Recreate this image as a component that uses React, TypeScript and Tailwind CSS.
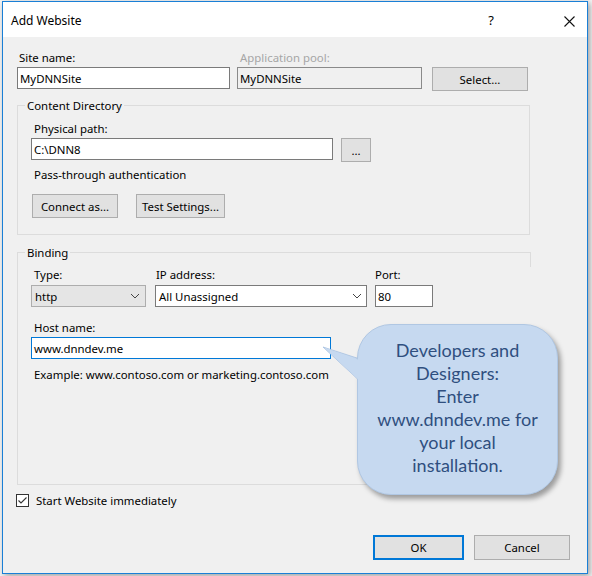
import React from 'react';

const font = { fontFamily: '"Noto Sans", "Segoe UI", sans-serif' };

function Chevron() {
  return (
    <svg width="10" height="6" viewBox="0 0 10 6" className="shrink-0">
      <polyline points="1,1 5,5 9,1" fill="none" stroke="#444" strokeWidth="1" />
    </svg>
  );
}

function Button({ label, className }: { label: string; className: string }) {
  return (
    <div
      className={`flex items-center justify-center h-[24px] bg-[#e1e1e1] border border-[#adadad] text-black ${className}`}
    >
      {label}
    </div>
  );
}

export default function App() {
  return (
    <div className="relative w-[592px] h-[576px] bg-[#f4f4f4] overflow-hidden" style={font}>
      {/* Window */}
      <div className="absolute left-[2px] top-[1px] w-[586px] h-[573px] border border-[#1a7fd6] bg-[#f0f0f0] shadow-[2px_2px_6px_rgba(0,0,0,0.35)] flex flex-col">
        {/* Title bar */}
        <div className="h-[35px] bg-white flex items-center pt-[3px] pl-[8px] pr-[12px] shrink-0">
          <span className="text-[12px] text-black">Add Website</span>
          <span className="ml-auto mr-[70px] text-[13px] text-black">?</span>
          <svg width="11" height="11" viewBox="0 0 11 11">
            <path d="M0.5 0.5 L10.5 10.5 M10.5 0.5 L0.5 10.5" stroke="#111" strokeWidth="1.1" />
          </svg>
        </div>

        {/* Body */}
        <div className="flex-1 pl-[14px] pt-[13px] text-[11.4px] text-black leading-[15px]">
          {/* Site name / App pool */}
          <div className="flex items-start">
            <div className="w-[213px]">
              <div className="h-[15px] pl-[2px]">Site name:</div>
              <div className="mt-[2px] h-[22px] bg-white border border-[#7a7a7a] flex items-center pl-[2px]">MyDNNSite</div>
            </div>
            <div className="w-[185px] ml-[7px]">
              <div className="h-[15px] pl-[3px] text-[#a6a6a6]">Application pool:</div>
              <div className="mt-[2px] h-[22px] bg-[#f0f0f0] border border-[#8a8a8a] flex items-center pl-[2px]">MyDNNSite</div>
            </div>
            <Button label="Select..." className="w-[96px] ml-[10px] mt-[17px]" />
          </div>

          {/* Content Directory */}
          <div className="relative mt-[14px] w-[513px] h-[130px] border border-[#dcdcdc] pl-[13px] pt-[15px]">
            <span className="absolute left-[7px] -top-[8px] px-[2px] bg-[#f0f0f0]">Content Directory</span>
            <div className="pl-[3px]">Physical path:</div>
            <div className="flex items-start mt-[2px]">
              <div className="w-[302px] h-[22px] bg-white border border-[#7a7a7a] flex items-center pl-[2px]">C:\DNN8</div>
              <Button label="..." className="w-[30px] ml-[8px]" />
            </div>
            <div className="mt-[5px] pl-[3px]">Pass-through authentication</div>
            <div className="flex mt-[12px]">
              <Button label="Connect as..." className="w-[86px] ml-[1px]" />
              <Button label="Test Settings..." className="w-[89px] ml-[18px]" />
            </div>
          </div>

          {/* Binding */}
          <div className="relative mt-[17px] w-[513px] h-[233px] border-l border-t border-b border-[#dcdcdc] pl-[13px] pt-[14px]">
            <span className="absolute left-[7px] -top-[8px] px-[2px] bg-[#f0f0f0]">Binding</span>
            <span className="absolute -right-[1px] -top-[1px] w-[1px] h-[15px] bg-[#dcdcdc]" />
            <div className="flex items-start">
              <div className="w-[115px]">
                <div className="pl-[3px]">Type:</div>
                <div className="mt-[3px] h-[22px] bg-[#e5e5e5] border border-[#adadad] flex items-center pl-[3px] pr-[5px]">
                  <span>http</span>
                  <span className="ml-auto"><Chevron /></span>
                </div>
              </div>
              <div className="w-[212px] ml-[9px]">
                <div className="pl-[1px]">IP address:</div>
                <div className="mt-[3px] h-[22px] bg-white border border-[#7a7a7a] flex items-center pl-[3px] pr-[4px]">
                  <span>All Unassigned</span>
                  <span className="ml-auto"><Chevron /></span>
                </div>
              </div>
              <div className="w-[58px] ml-[8px]">
                <div>Port:</div>
                <div className="mt-[3px] h-[22px] bg-white border border-[#7a7a7a] flex items-center pl-[2px]">80</div>
              </div>
            </div>
            <div className="mt-[13px] pl-[3px]">Host name:</div>
            <div className="mt-[2px] w-[300px] h-[22px] bg-white border border-[#0078d7] flex items-center pl-[2px]">www.dnndev.me</div>
            <div className="mt-[8px] pl-[3px]">Example: www.contoso.com or marketing.contoso.com</div>
          </div>

          {/* Start checkbox */}
          <div className="flex items-center mt-[8px] -ml-[1px]">
            <div className="w-[13px] h-[13px] border border-[#333] bg-white flex items-center justify-center">
              <svg width="11" height="11" viewBox="0 0 11 11">
                <polyline points="1.5,5.5 4,8 9.5,2.5" fill="none" stroke="#333" strokeWidth="1.1" />
              </svg>
            </div>
            <span className="ml-[7px]">Start Website immediately</span>
          </div>

          {/* OK / Cancel */}
          <div className="flex mt-[27px] pl-[356px]">
            <div className="flex items-center justify-center w-[91px] h-[25px] bg-[#e1e1e1] border-2 border-[#0078d7]">OK</div>
            <Button label="Cancel" className="w-[96px] h-[25px] ml-[10px]" />
          </div>
        </div>
      </div>

      {/* Callout overlay */}
      <svg className="absolute left-[318px] top-[340px]" width="50" height="50" viewBox="0 0 50 50">
        <polygon points="5,7 45,20 45,44" fill="#c6d9f0" stroke="#a7c0df" strokeWidth="0.8" />
      </svg>
      <div className="absolute left-[357px] top-[324px] w-[201px] h-[171px] rounded-[34px] bg-[#c6d9f0] border border-[#b0c7e3] shadow-[3px_4px_5px_rgba(0,0,0,0.35)] flex flex-col items-center justify-center pb-[3px] text-[18px] leading-[23px] text-[#2f4f7f]" style={{ fontFamily: 'Lato, "Open Sans", sans-serif' }}>
        <div>Developers and</div>
        <div>Designers:</div>
        <div>Enter</div>
        <div>www.dnndev.me for</div>
        <div>your local</div>
        <div>installation.</div>
      </div>
      <svg className="absolute left-[318px] top-[340px]" width="50" height="50" viewBox="0 0 50 50">
        <polygon points="6,7.5 44,21 44,43" fill="#c6d9f0" />
      </svg>
    </div>
  );
}
